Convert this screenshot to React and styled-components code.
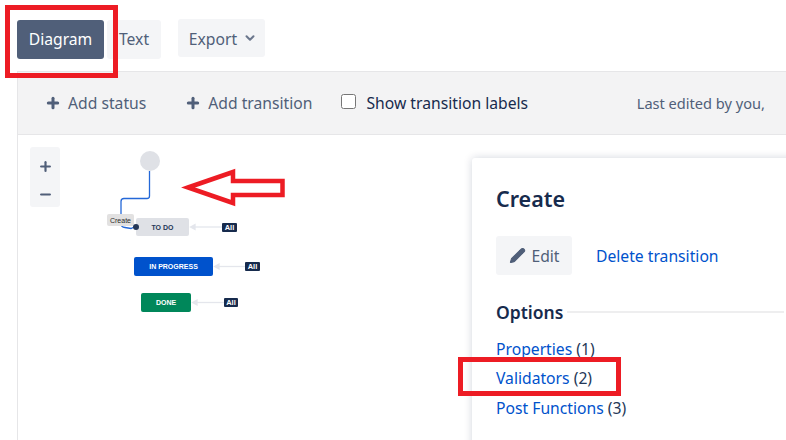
import React from "react";
import styled, { createGlobalStyle } from "styled-components";
import { Plus, Minus, ChevronDown, Pencil } from "lucide-react";

const Global = createGlobalStyle`
  html, body { margin: 0; padding: 0; background: #fff; }
  body { font-family: "Noto Sans", "Open Sans", sans-serif; color: #172b4d; overflow: hidden; }
`;

const Page = styled.div`
  position: relative;
  width: 786px;
  height: 440px;
  overflow: hidden;
  background: #fff;
`;

const Tabs = styled.div`
  display: flex;
  align-items: flex-start;
  height: 71px;
  padding: 19px 0 0 17px;
  box-sizing: border-box;
`;

const TabButton = styled.button`
  height: 39px;
  margin-top: 1px;
  margin-right: 3px;
  padding: 0 0 2px;
  width: ${(p) => p.$w}px;
  border: 0;
  border-radius: 3px;
  font: 400 15.7px "Noto Sans", sans-serif;
  background: ${(p) => (p.$active ? "#505f79" : "#f4f5f7")};
  color: ${(p) => (p.$active ? "#fff" : "#505f79")};
`;

const ExportButton = styled.button`
  display: flex;
  align-items: center;
  justify-content: center;
  gap: 6px;
  width: 87px;
  height: 38px;
  margin-left: 14px;
  padding: 2px 0 0 3px;
  border: 0;
  border-radius: 3px;
  font: 400 15.7px "Noto Sans", sans-serif;
  background: #f4f5f7;
  color: #505f79;
`;

const Toolbar = styled.div`
  display: flex;
  align-items: center;
  height: 64px;
  margin-left: 17px;
  padding-left: 27px;
  box-sizing: border-box;
  background: #f3f3f4;
  border: 1px solid #e6e6e8;
  border-right: 0;
  white-space: nowrap;
`;

const ToolAction = styled.span`
  display: flex;
  align-items: center;
  gap: 7px;
  margin-right: ${(p) => p.$gap}px;
  font-size: 15.7px;
  color: #505f79;
`;

const CheckLabel = styled.label`
  display: flex;
  align-items: center;
  gap: 10px;
  font-size: 15.7px;
  color: #172b4d;
`;

const Check = styled.input`
  width: 15px;
  height: 15px;
  margin: 0;
  position: relative;
  top: -2px;
`;

const Edited = styled.span`
  margin-left: auto;
  margin-right: 21px;
  font-size: 14.6px;
  color: #505f79;
`;

const Canvas = styled.div`
  position: relative;
  height: 305px;
  margin-left: 17px;
  border-left: 1px solid #e6e6e8;
`;

const Zoom = styled.div`
  position: absolute;
  left: 12px;
  top: 12px;
  width: 30px;
  height: 60px;
  padding-top: 12px;
  box-sizing: border-box;
  display: flex;
  flex-direction: column;
  align-items: center;
  gap: 13px;
  background: #f4f5f7;
  border-radius: 3px;
  color: #505f79;
`;

const Wires = styled.svg`
  position: absolute;
  left: -18px;
  top: -135px;
  width: 786px;
  height: 440px;
  pointer-events: none;
`;

const Node = styled.div`
  position: absolute;
  left: ${(p) => p.$x - 18}px;
  top: ${(p) => p.$y - 135}px;
  width: ${(p) => p.$w}px;
  height: ${(p) => p.$h}px;
  display: flex;
  align-items: center;
  justify-content: center;
  box-sizing: border-box;
  border-radius: 2px;
  font: 700 7px "Liberation Sans", sans-serif;
  background: ${(p) => p.$bg};
  color: ${(p) => p.$fg};
  white-space: nowrap;
`;

const Badge = styled(Node)`
  background: #172b4d;
  color: #fff;
  font-size: 7.5px;
  border-radius: 1px;
`;

const EdgeLabel = styled(Node)`
  background: #e2e1e1;
  color: #2b2b2b;
  font-weight: 400;
  font-size: 7px;
  border-radius: 2px;
`;

const Pin = styled(Node)`
  background: #253858;
  border-radius: 50%;
`;

const Panel = styled.aside`
  position: absolute;
  left: 472px;
  top: 158px;
  width: 330px;
  height: 300px;
  padding: 24px 0 0 24px;
  box-sizing: border-box;
  background: #fff;
  border-radius: 3px;
  box-shadow: 0 0 8px rgba(9, 30, 66, 0.18);
`;

const Title = styled.h2`
  margin: 0;
  font-size: 21.5px;
  line-height: 34px;
  font-weight: 600;
  color: #172b4d;
`;

const PanelActions = styled.div`
  display: flex;
  align-items: center;
  gap: 24px;
  margin-top: 20px;
`;

const EditButton = styled.button`
  display: flex;
  align-items: center;
  justify-content: center;
  gap: 5px;
  width: 76px;
  height: 39px;
  padding: 0 0 0 1px;
  border: 0;
  border-radius: 3px;
  background: #f4f5f7;
  color: #505f79;
  font: 400 15.7px "Noto Sans", sans-serif;
`;

const LinkText = styled.a`
  color: #0052cc;
  font-size: 15.7px;
  text-decoration: none;
`;

const Section = styled.div`
  display: flex;
  align-items: center;
  gap: 4px;
  margin-top: 23px;
  width: 288px;
  font-size: 17.5px;
  font-weight: 600;
  line-height: 28px;
  color: #172b4d;
  &::after {
    content: "";
    flex: 1;
    height: 2px;
    background: #eeeeef;
  }
`;

const OptionList = styled.div`
  display: flex;
  flex-direction: column;
  margin-top: 9px;
`;

const Option = styled.div`
  height: 29.4px;
  line-height: 29.4px;
  font-size: 15.7px;
  color: #253858;
`;

const Frame = styled.div`
  position: absolute;
  left: ${(p) => p.$x}px;
  top: ${(p) => p.$y}px;
  width: ${(p) => p.$w}px;
  height: ${(p) => p.$h}px;
  box-sizing: border-box;
  border: 5px solid #ed1c24;
`;

const RedArrow = styled.svg`
  position: absolute;
  left: 180px;
  top: 167px;
  width: 108px;
  height: 40px;
`;

export default function App() {
  return (
    <Page>
      <Global />
      <Tabs>
        <TabButton $active $w={87}>Diagram</TabButton>
        <TabButton $w={54}>Text</TabButton>
        <ExportButton>
          Export
          <ChevronDown size={14} strokeWidth={3.5} color="#6b778c" style={{ marginTop: -3 }} />
        </ExportButton>
      </Tabs>
      <Toolbar>
        <ToolAction $gap={39}>
          <Plus size={16} strokeWidth={4.5} />
          Add status
        </ToolAction>
        <ToolAction $gap={29}>
          <Plus size={16} strokeWidth={4.5} />
          Add transition
        </ToolAction>
        <CheckLabel>
          <Check type="checkbox" readOnly />
          Show transition labels
        </CheckLabel>
        <Edited>Last edited by you,</Edited>
      </Toolbar>
      <Canvas>
        <Zoom>
          <Plus size={15} strokeWidth={3.5} />
          <Minus size={15} strokeWidth={3.5} />
        </Zoom>
        <Wires viewBox="0 0 786 440">
          <circle cx="150" cy="161" r="10" fill="#dfe1e6" />
          <path
            d="M149.500 171 V196 Q149.500 198.500 147 198.500 H124 Q121 198.500 121 201.500 V224 Q121 227 125 227.500 L131 228.500 L135 226.500"
            fill="none"
            stroke="#2468d8"
            strokeWidth="1.300"
          />
          <g stroke="#e4e6ec" strokeWidth="1.300" fill="#e4e6ec">
            <path d="M193 227 H222" />
            <path d="M190.500 227 L195 224.500 V229.500 Z" />
            <path d="M217 266.500 H245" />
            <path d="M214.500 266.500 L219 264 V269 Z" />
            <path d="M195 302.500 H224" />
            <path d="M192.500 302.500 L197 300 V305 Z" />
          </g>
        </Wires>
        <Node $x={136} $y={218} $w={53} $h={18} $bg="#dfe1e6" $fg="#253858">TO DO</Node>
        <Node $x={134} $y={257} $w={79} $h={19} $bg="#0052cc" $fg="#fff">IN PROGRESS</Node>
        <Node $x={141} $y={293} $w={50} $h={19} $bg="#00875a" $fg="#fff">DONE</Node>
        <Badge $x={222} $y={223} $w={15} $h={8.500}>All</Badge>
        <Badge $x={245} $y={262} $w={15} $h={9}>All</Badge>
        <Badge $x={224} $y={298} $w={14} $h={9}>All</Badge>
        <EdgeLabel $x={107} $y={214} $w={27} $h={12}>Create</EdgeLabel>
        <Pin $x={133} $y={224} $w={6} $h={6} />
      </Canvas>
      <Panel>
        <Title>Create</Title>
        <PanelActions>
          <EditButton>
            <Pencil size={17} fill="#505f79" strokeWidth={1.500} />
            Edit
          </EditButton>
          <LinkText>Delete transition</LinkText>
        </PanelActions>
        <Section>Options</Section>
        <OptionList>
          <Option><LinkText>Properties</LinkText> (1)</Option>
          <Option><LinkText>Validators</LinkText> (2)</Option>
          <Option><LinkText>Post Functions</LinkText> (3)</Option>
        </OptionList>
      </Panel>
      <Frame $x={5} $y={5} $w={113} $h={73} />
      <Frame $x={458} $y={357} $w={163} $h={39} />
      <RedArrow viewBox="0 0 108 40">
        <path
          d="M8 20.500 L53 5 V14 H102.500 V28 H53 V36 Z"
          fill="none"
          stroke="#ed1c24"
          strokeWidth="4.500"
        />
      </RedArrow>
    </Page>
  );
}
